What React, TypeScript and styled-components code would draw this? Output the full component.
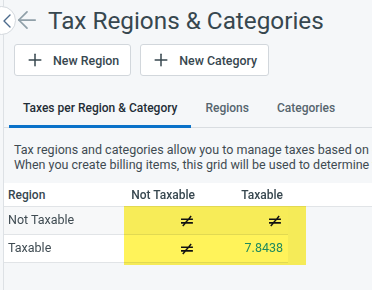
import * as React from "react";
import styled, { createGlobalStyle } from "styled-components";
import { ArrowLeft, ChevronLeft, Plus } from "lucide-react";

const GlobalStyle = createGlobalStyle`
  html, body {
    margin: 0;
    padding: 0;
    background: #f5f7f9;
    font-family: Roboto, "Liberation Sans", Arial, sans-serif;
    overflow: hidden;
  }
`;

const Page = styled.div`
  position: relative;
  margin-left: 3px;
  border-left: 1px solid #dde1e5;
  height: 290px;
  overflow: hidden;
`;

const CollapseButton = styled.div`
  position: fixed;
  left: -13px;
  top: 6px;
  width: 27px;
  height: 27px;
  border-radius: 50%;
  background: #fff;
  border: 1px solid #d3d8dd;
  display: flex;
  align-items: center;
  justify-content: flex-end;
  color: #4b6a8c;
  svg {
    margin-right: -4px;
  }
`;

const TitleRow = styled.div`
  display: flex;
  align-items: center;
  height: 40px;
  padding-left: 9px;
  gap: 7px;
  color: #90a0a9;
`;

const Title = styled.h1`
  margin: 0;
  font-size: 24.3px;
  font-weight: 400;
  color: #37474f;
`;

const Actions = styled.div`
  display: flex;
  gap: 9px;
  padding: 4px 0 0 10px;
`;

const Button = styled.button`
  display: flex;
  align-items: center;
  gap: 8px;
  height: 32px;
  padding: 0 11px 0 10px;
  background: #fff;
  border: 1px solid #d2d7dc;
  border-radius: 3px;
  font-family: inherit;
  font-size: 12.4px;
  font-weight: 500;
  color: #37474f;
`;

const Tabs = styled.div`
  display: flex;
  margin-top: 20px;
  padding-left: 5px;
  border-bottom: 1px solid #d9dde1;
`;

const Tab = styled.div<{ $active?: boolean }>`
  padding: 0 14px;
  height: 32px;
  line-height: 24px;
  font-size: 12px;
  font-weight: 500;
  color: ${p => (p.$active ? "#1f2d36" : "#56656e")};
  border-bottom: 3px solid ${p => (p.$active ? "#0a72c9" : "transparent")};
  margin-bottom: -1px;
  box-sizing: border-box;
`;

const Description = styled.p`
  margin: 14px 0 0 10px;
  font-size: 12.5px;
  line-height: 15px;
  color: #3f4b52;
  white-space: nowrap;
`;

const Grid = styled.div`
  position: relative;
  margin-top: 11px;
`;

const columns = "120px 76px 88px";

const HeaderRow = styled.div`
  display: grid;
  grid-template-columns: ${columns};
  height: 23px;
  align-items: center;
  background: #fff;
  border-bottom: 1px solid #e1e4e7;
  font-size: 12px;
  font-weight: 500;
  color: #37474f;
`;

const Row = styled.div<{ $shade?: boolean }>`
  display: grid;
  grid-template-columns: ${columns};
  width: 284px;
  height: 28px;
  box-sizing: border-box;
  padding-bottom: 2px;
  align-items: center;
  background: ${p => (p.$shade ? "#f7f8f9" : "#fff")};
  border-bottom: 1px solid #e1e4e7;
  font-size: 12.5px;
  color: #3f4b52;
  &:last-of-type {
    border-bottom: none;
  }
`;

const Cell = styled.div<{ $right?: boolean }>`
  position: relative;
  z-index: 1;
  padding: ${p => (p.$right ? "0 5px 0 0" : "0 4px")};
  text-align: ${p => (p.$right ? "right" : "left")};
  white-space: nowrap;
`;

const NotEqual = styled.span`
  font-family: "DejaVu Sans", sans-serif;
  font-size: 19px;
  line-height: 20px;
  color: #111;
`;

const Rate = styled.span`
  color: #1f8a5e;
`;

const Highlight = styled.div`
  position: absolute;
  left: 120px;
  top: 23px;
  width: 182px;
  height: 59px;
  background: #fff35a;
  mix-blend-mode: multiply;
  pointer-events: none;
`;

const rows = [
  { region: "Not Taxable", notTaxable: null, taxable: null },
  { region: "Taxable", notTaxable: null, taxable: "7.8438" },
];

function Value({ value }: { value: string | null }) {
  return value == null ? <NotEqual>≠</NotEqual> : <Rate>{value}</Rate>;
}

export default function App() {
  return (
    <>
      <GlobalStyle />
      <Page>
        <CollapseButton>
          <ChevronLeft size={24} strokeWidth={1.4} />
        </CollapseButton>
        <TitleRow>
          <ArrowLeft size={28} strokeWidth={1.5} />
          <Title>Tax Regions &amp; Categories</Title>
        </TitleRow>
        <Actions>
          <Button>
            <Plus size={20} strokeWidth={1.8} />
            New Region
          </Button>
          <Button>
            <Plus size={20} strokeWidth={1.8} />
            New Category
          </Button>
        </Actions>
        <Tabs>
          <Tab $active>Taxes per Region &amp; Category</Tab>
          <Tab>Regions</Tab>
          <Tab>Categories</Tab>
        </Tabs>
        <Description>
          Tax regions and categories allow you to manage taxes based on geography and product type.
          <br />
          When you create billing items, this grid will be used to determine the tax rate.
        </Description>
        <Grid>
          <HeaderRow>
            <Cell>Region</Cell>
            <Cell $right>Not Taxable</Cell>
            <Cell $right>Taxable</Cell>
          </HeaderRow>
          {rows.map((r, i) => (
            <Row key={r.region} $shade={i === 0}>
              <Cell>{r.region}</Cell>
              <Cell $right><Value value={r.notTaxable} /></Cell>
              <Cell $right><Value value={r.taxable} /></Cell>
            </Row>
          ))}
          <Highlight />
        </Grid>
      </Page>
    </>
  );
}
